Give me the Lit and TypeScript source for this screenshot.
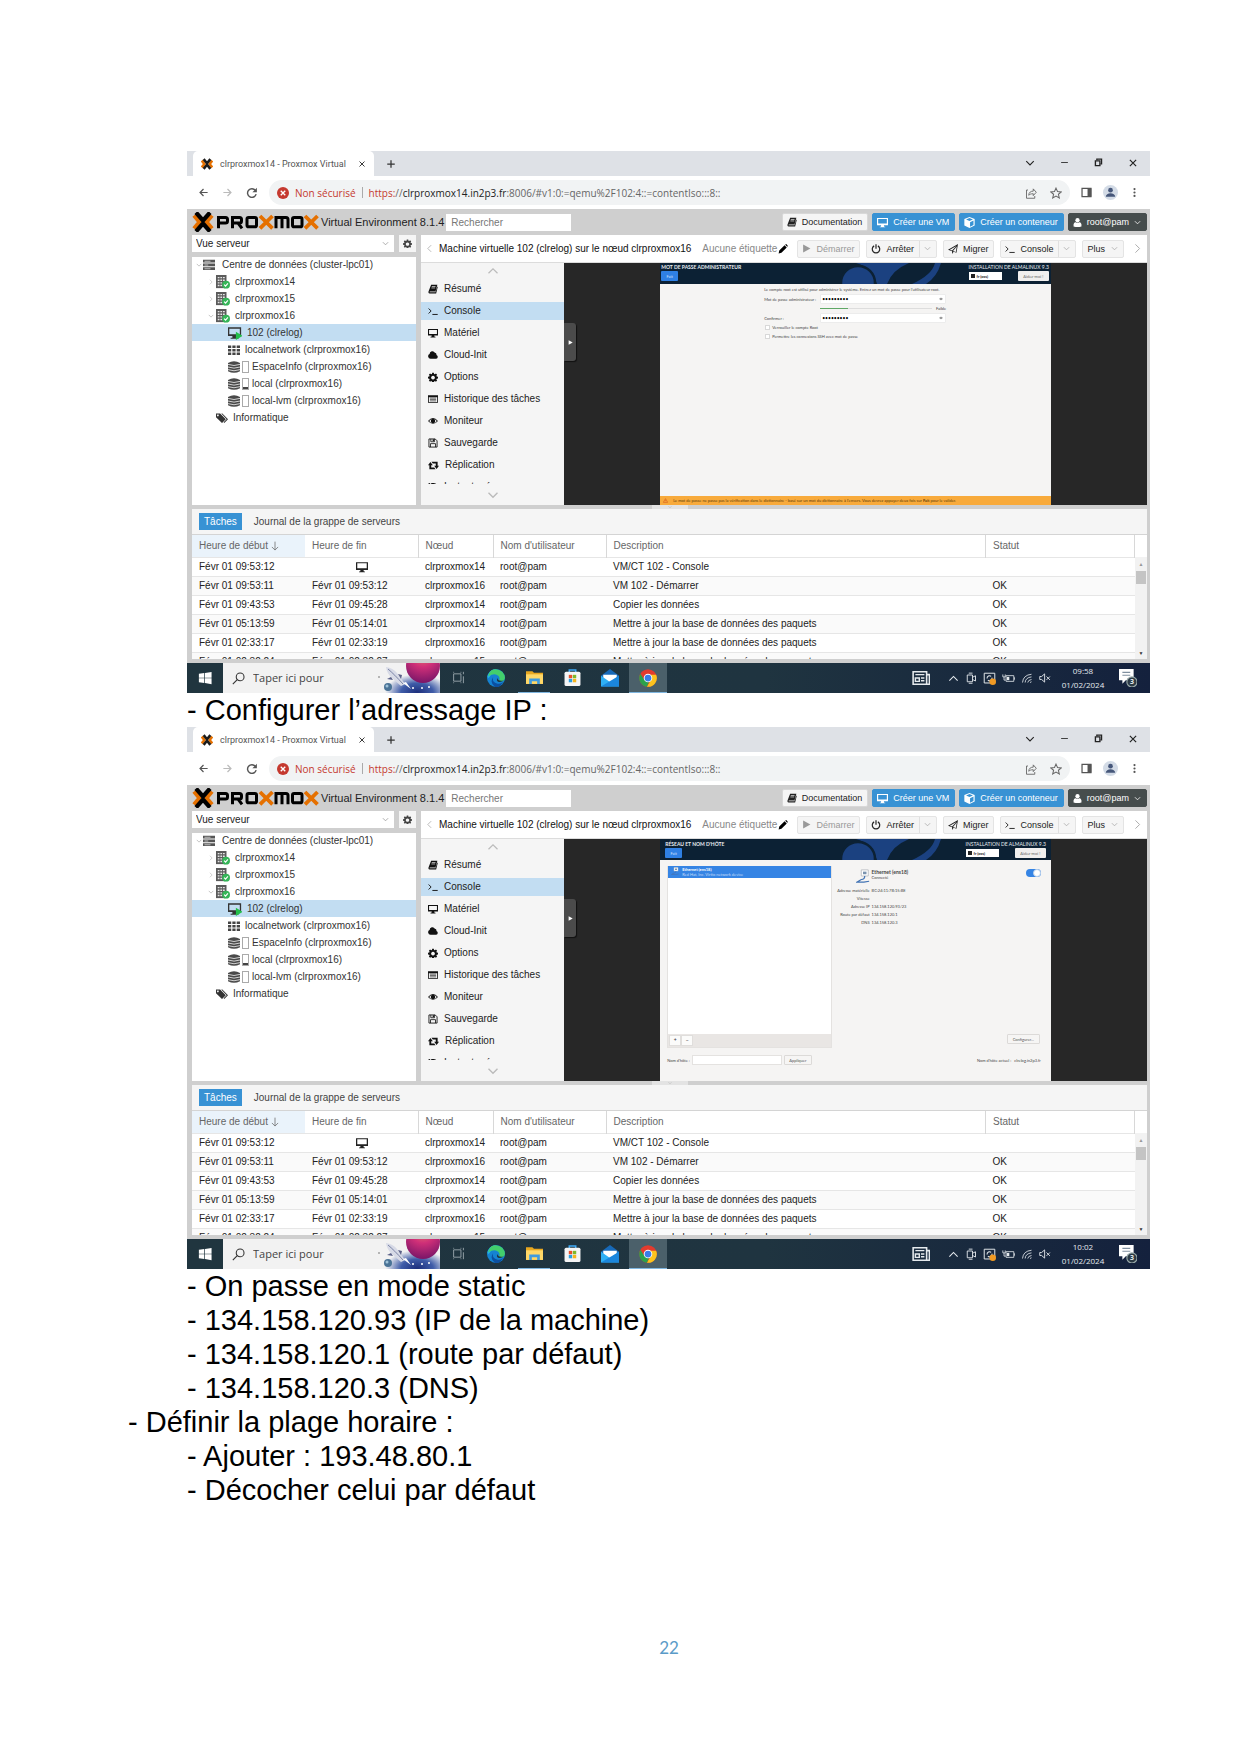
import { LitElement, html, css, svg, nothing } from "lit";
import { customElement, property } from "lit/decorators.js";

/* ---------- icons ---------- */
const icon = (name: string, size = 12) => {
  const d = glyphs[name];
  return html`<svg class="ic" width=${size} height=${size} viewBox="0 0 16 16" fill="currentColor" aria-hidden="true">${d}</svg>`;
};

const line = (d: string, w = 1.4) =>
  svg`<path d=${d} fill="none" stroke="currentColor" stroke-width=${w}></path>`;

const glyphs: Record<string, unknown> = {
  back: line("M14 8H3M8 3L3 8l5 5", 1.8),
  forward: line("M2 8h11M8 3l5 5-5 5", 1.8),
  reload: svg`${line("M13.5 9.5A5.8 5.8 0 1 1 12.5 4.5", 1.9)}<path d="M14.5 1v6h-6z"></path>`,
  close: line("M3 3l10 10M13 3L3 13", 1.9),
  plus: line("M8 2v12M2 8h12", 2),
  minus: line("M2 8h12", 1.5),
  chevDown: line("M2 5l6 6 6-6", 1.8),
  chevUp: line("M2 11l6-6 6 6", 1.6),
  chevLeft: line("M11 2L5 8l6 6", 1.4),
  chevRight: line("M5 2l6 6-6 6", 1.4),
  restore: svg`${line("M2.500 5h8v8.500h-8z", 2.4)}${line("M5 4V2h8.500v8.500h-2", 2.2)}`,
  warn: svg`<circle cx="8" cy="8" r="8" fill="#c5392f"></circle><path d="M5 5l6 6M11 5l-6 6" stroke="#fff" stroke-width="1.800"></path>`,
  share: line("M4 4H2v11h11v-3M5 11c0-4 3-5.500 6-5.500V2.500l4 4.500-4 4.500V9c-3 0-4.500.5-6 2z", 1.2),
  star: line("M8 1.500l2 4.600 5 .4-3.800 3.200 1.200 4.800L8 12l-4.400 2.500 1.200-4.800L1 6.500l5-.4z", 1.4),
  panel: svg`${line("M1.500 2h13v12h-13z", 1.8)}<path d="M9.500 2H15v12H9.500z"></path>`,
  person: svg`<circle cx="8" cy="8" r="8" fill="#d3dbe6"></circle><g fill="#46577a"><circle cx="8" cy="5.500" r="2.500"></circle><path d="M3 12.500c0-5 10-5 10 0z"></path></g>`,
  dots: svg`<circle cx="8" cy="3" r="1.600"></circle><circle cx="8" cy="8" r="1.600"></circle><circle cx="8" cy="13" r="1.600"></circle>`,
  book: svg`<path d="M5 1h10l-3 11H3.500q-1.500 0-1 1.300H12L14.800 4l.8.8L13 15H2.500Q0 15 .8 12z"></path><path d="M6 4h6M5.400 6.300h6" stroke="#fff" stroke-width="1"></path>`,
  term: svg`${line("M1 4l4 4-4 4", 1.5)}${line("M7 13.500h8.500", 1.5)}`,
  monitor: svg`<path d="M0 1.500h16v10.500h-6l.5 2H12v1H4v-1h1.500l.5-2H0zM1.700 3v6.500h12.600V3z" fill-rule="evenodd"></path>`,
  cloud: svg`<path d="M4 14a4 4 0 0 1-1.500-7.600A4.500 4.500 0 0 1 11 4.500 3 3 0 0 1 13.500 8 3.100 3.100 0 0 1 13 14z"></path>`,
  gear: svg`<path fill-rule="evenodd" d="M6.700 1h2.600l.4 2 1.300.6 1.700-1.200 1.900 1.900-1.200 1.700.6 1.300 2 .4v2.600l-2 .4-.6 1.300 1.200 1.700-1.900 1.900-1.700-1.200-1.300.6-.4 2H6.700l-.4-2-1.300-.6-1.700 1.200-1.900-1.900L2.600 12 2 10.700l-2-.4V7.700l2-.4L2.600 6 1.400 4.300l1.900-1.900L5 3.600 6.300 3zM8 6a3 3 0 1 0 .01 0z"></path>`,
  list: svg`<path fill-rule="evenodd" d="M0 2h16v12H0zM1.300 5v7.700h13.400V5z"></path><path d="M3 6.500h10M3 8.700h10M3 11h10" stroke="currentColor" stroke-width="1"></path>`,
  eye: svg`<path fill-rule="evenodd" d="M0 8q8-10 16 0-8 9-16 0zm2 0q2 2.800 4 3.300-3-3.300 0-6.600Q4 5.500 2 8zm12 0q-2-2.500-4-3.300 3 3.300 0 6.600 2-.500 4-3.300z"></path>`,
  floppy: svg`${line("M1.500 1.500h10l3 3v10h-13z", 1.4)}${line("M4 14.500V9h8v5.500M4.500 1.500v4.500h6V1.500", 1.3)}<path d="M7.500 2h2v3h-2z"></path>`,
  retweet: svg`<path d="M3.500 3L7 7.500H4.700V11H9l2 2.500H2V7.500H0zM12.500 13L9 8.500h2.300V5H7L5 2.500h9v6h2z"></path>`,
  history: line("M3 6a6 6 0 1 1 0 5M2 1.500V6.500h5", 2),
  pencil: svg`<path d="M1 15l1-4.500L10.500 2 14 5.500 5.500 14zM11.500 1l1-.8q1-.5 3.300 2.800L14.800 4.500z"></path>`,
  play: svg`<path d="M2 1l13 7-13 7z"></path>`,
  power: line("M5 3a6 6 0 1 0 6 0M8 0.500v7", 1.9),
  plane: svg`<path fill-rule="evenodd" d="M16 0l-2.500 14-4.500-1.800L6.500 16v-4.500L0 9zM13.500 3.200L3 9l3.500 1.300zM14 4L8 11l4.500 1.800z"></path>`,
  cube: svg`<path fill-rule="evenodd" d="M8 0l7.500 3v9.500L8 16 .5 12.500V3zM8 1.600L3 3.700l5 2 5-2zM8.800 7.500v6.500l5-2.400V5.200z"></path>`,
  user: svg`<circle cx="8" cy="4" r="3.800"></circle><path d="M1 15V11q1-4 4-3.500 3 2 6 0Q14 7 15 11v4q-7 2-14 0z"></path>`,
  servers: svg`<path fill="#555" d="M0 1h16v3.800H0zM0 6h16v3.800H0zM0 11h16v3.800H0z"></path><path d="M2 3h8M2 8h5M2 13h8" stroke="#ddd" stroke-width="1"></path>`,
  node: svg`<path fill="#5b5b5b" d="M0 0h12v15H0z"></path><path d="M2 3h2M5 3h2M8 3h2M2 6h2M5 6h2M8 6h2M2 9h2M5 9h2M2 12h2M5 12h2" stroke="#e5e5e5" stroke-width="1.500"></path><circle cx="11.500" cy="11" r="4.500" fill="#35b558"></circle><path d="M9.300 11l1.600 1.700 2.700-3.200" stroke="#fff" fill="none" stroke-width="1.300"></path>`,
  vm: svg`<path fill="#333" fill-rule="evenodd" d="M0 1.500h15v10h-5v2h2v1H3v-1h2v-2H0zM1.500 3v6.500h12V3z"></path><path fill="#24bf4c" d="M9 6.500l7.500 4.800L9 16z"></path>`,
  grid: svg`<g fill="#444"><path d="M0 2h4.300v3.300H0zM5.800 2h4.300v3.300H5.800zM11.600 2H16v3.300h-4.400zM0 6.600h4.300v3.300H0zM5.800 6.600h4.300v3.300H5.800zM11.600 6.600H16v3.300h-4.400zM0 11.200h4.300v3.300H0zM5.800 11.200h4.300v3.300H5.800zM11.600 11.200H16v3.300h-4.400z"></path></g>`,
  disk: svg`<path fill="#4a4a4a" d="M0 2.500Q8-2 16 2.500V13.500Q8 18 0 13.500z"></path><path d="M0 4.500q8 3 16 0M0 8q8 3 16 0M0 11.500q8 3 16 0" fill="none" stroke="#fff" stroke-width="1"></path>`,
  tags: svg`<path fill-rule="evenodd" d="M0 2h5.500L13 9.500 8 14.500 0 7zM2.500 3.300a1.200 1.200 0 1 0 .01 0z"></path><path d="M7 2h1.500L16 9.500l-5 5-.8-.8 4-4.200z"></path>`,
  arrowDown: line("M8 1v13M3 9.500l5 5 5-5", 1.2),
  lens: svg`<circle cx="10" cy="6" r="4.800" fill="none" stroke="currentColor" stroke-width="1.300"></circle>${line("M6.500 9.500L1 15", 1.4)}`,
  px: svg`<g fill="none" stroke-width="3.400"><path d="M1 3.500l3.500 4.500L1 12.500M15 3.500L11.500 8l3.500 4.500" stroke="#e57000"></path><path d="M3.500 1.500L8 7l4.500-5.500M3.500 14.500L8 9l4.500 5.500" stroke="#1b1b1b"></path></g>`,
  win: svg`<path fill="#fff" d="M1 3.200l6.200-.9v5.300H1zM8 2.200L15.500 1v6.600H8zM1 8.400h6.200v5.300L1 12.800zM8 8.400h7.500V15L8 13.800z"></path>`,
  taskview: line("M2 3.500h9v9H2zM2 1v1M11 1v1M2 15v-1M11 15v-1M14 1v3M14 6.500v8.500", 1),
  edge: svg`<circle cx="8" cy="8" r="8" fill="#1583d2"></circle><path fill="#27b5e0" d="M.3 7Q2 .5 8 0 5 3 1.500 8z"></path><path fill="#43cf6c" d="M4 1.200Q9-1.500 13.500 2.500 17.500 7 15 10q-2.500 1.800-4.500.5Q12 8 10 6 7 3 1 6.500 1.800 3 4 1.200z"></path><path fill="#0c4fa0" d="M5.500 7Q4 12 9.500 13q3 .5 5-1.500Q11 17 7 15.800 2 12 5.500 7z"></path><path fill="#20353f" d="M9.800 8Q9 11 15 10.200 12 12.200 9.500 11 8 10 9.800 8z"></path>`,
  folder: svg`<path fill="#e9a820" d="M0 2h6l1.500 1.500H16V14H0z"></path><path fill="#ffd868" d="M0 5h16v9H0z"></path><path fill="#3f9be0" d="M3 14V9h10v5h-2.500v-2.500h-5V14z"></path>`,
  store: svg`<path d="M5 3V1h6v2" stroke="#3fa9f5" fill="none" stroke-width="1.500"></path><rect x=".5" y="2.500" width="15" height="13.500" rx="1.500" fill="#f5f5f5"></rect><path fill="#e8502a" d="M4.500 5.500h3.200v3.200H4.500z"></path><path fill="#7fb92b" d="M8.300 5.500h3.200v3.200H8.300z"></path><path fill="#2a9fe0" d="M4.500 9.300h3.200v3.200H4.500z"></path><path fill="#f6b51e" d="M8.300 9.300h3.200v3.200H8.300z"></path>`,
  mail: svg`<path fill="#1769b8" d="M0 6l8-6 8 6v9H0z"></path><path fill="#fff" d="M2 5h12v5l-6 3-6-3z"></path><path fill="#2fb0f5" d="M0 6l8 5.500L16 6v9.500H0z"></path><path fill="#1b86dc" d="M0 15.500L16 6v9.500z"></path>`,
  chrome: svg`<circle cx="8" cy="8" r="7.800" fill="#e33b2e"></circle><path fill="#fcc31e" d="M8 5h7.200A7.800 7.800 0 0 1 7 15.800L11 9z"></path><path fill="#2ba24c" d="M1.200 4.200L5 10l4 1-2 4.800A7.800 7.800 0 0 1 1.200 4.200z"></path><circle cx="8" cy="8" r="3.800" fill="#fff"></circle><circle cx="8" cy="8" r="3" fill="#3a7de8"></circle>`,
  news: svg`${line("M1 2.500h12v11H1zM13 5h2.500v8.500H13", 1.4)}${line("M3 5h8M3 8h3.500v3H3zM8 8h3M8 10.500h3", 1.3)}`,
  meet: line("M3 4h7v9H3zM10 7l4-2v7l-4-2M5 1.500h5M5 15h5", 1.2),
  sync: svg`${line("M1.500 1.500h13v12h-13z", 1.2)}${line("M5 8a3 3 0 0 1 5-2.500M11 7a3 3 0 0 1-5 3", 1.3)}<circle cx="12" cy="12" r="4" fill="#f09a24"></circle>`,
  battery: svg`${line("M5 4.500h9.500v7H5zM15.500 6.500v3M1 3v3h3V3M2.500 6v4h2", 1)}<path d="M6 6h3v4H6z"></path>`,
  wifi: line("M2 14Q3 4 14 3M5.500 14Q6 7.500 14 6.500M9 14q.500-3.500 5-4M12 14l2-1", 1.1),
  mute: svg`${line("M1 6h2.500L7.500 2.500v11L3.500 10H1z", 1.2)}${line("M10 6l4.500 4.500M14.500 6L10 10.500", 1.2)}`,
  note: svg`<path fill="#fff" d="M0 0h13v10H6l-3 3v-3H0z"></path><path d="M3 3h7M3 5.500h7" stroke="#8090a0"></path><circle cx="11.500" cy="11.500" r="4.500" fill="#2c3a44" stroke="#9aa"></circle>`,
  plug: svg`<path d="M6 1h8v7H6z" fill="#fff" stroke="#b8bcc0"></path><path d="M8 3h4v3H8z" fill="#7a93ae"></path><path d="M10 8q0 4-4 4l-5 3h8l6-1" fill="none" stroke="#4273b4" stroke-width="1.400"></path>`,
  alert: svg`<path d="M8 2l7 12H1z" fill="none" stroke="#d4561c" stroke-width="1.800"></path><path d="M8 6v4" stroke="#d4561c" stroke-width="1.600"></path>`,
};

const base = css`
  *, *::before, *::after { box-sizing: border-box; }
  .ic { display: block; flex: none; }
  button, input, select { font: inherit; color: inherit; margin: 0; border-radius: 0; }
  button { display: inline-flex; align-items: center; justify-content: center; border: 0; padding: 0; background: none; white-space: nowrap; }
`;

/* ---------- guest installer shown in the VM console ---------- */
@customElement("guest-screen")
export class GuestScreen extends LitElement {
  @property() screen = "password";

  static styles = [base, css`
    :host { display: flex; flex-direction: column; width: 67%; background: #f5f4f3; font: 4px/5px Lato, "Liberation Sans", sans-serif; color: #444; }
    .head { height: 21px; flex: none; display: flex; justify-content: space-between; padding: 2px 2px 0 1px; color: #e8edf2; background: #0c2134; position: relative; overflow: hidden; }
    .indent .head { padding: 3px 5px 0; }
    .wrap { display: flex; flex-direction: column; flex: 1; }
    .art { position: absolute; top: 0; left: 46%; }
    .left, .right { position: relative; display: flex; flex-direction: column; align-items: flex-start; gap: 1px; }
    .title { font-weight: 700; font-size: 5px; line-height: 5px; white-space: nowrap; }
    .right .title { font-weight: 400; }
    .done { width: 17px; height: 10px; background: #2f80e4; color: #cfe2fb; border-radius: 1px; }
    .tools { display: flex; width: 100%; justify-content: space-between; align-items: center; }
    .kbd { width: 33px; height: 8px; background: #fff; color: #111; font-weight: 700; gap: 2px; justify-content: flex-start; padding-left: 2px; }
    .kbd::before { content: ""; width: 4px; height: 4px; background: #222; }
    .help { width: 31px; height: 10px; background: #f0efee; color: #666; border-radius: 1px; }
    .form { width: 182px; margin: 2px auto 0 104px; display: grid; grid-template-columns: 56px 1fr; align-items: center; }
    .form .full { grid-column: 1 / -1; white-space: nowrap; height: 8px; line-height: 7px; }
    .field { display: flex; height: 10px; align-items: center; background: #fff; border: 1px solid #ececec; border-radius: 1px; color: #888; padding-right: 2px; }
    .field input { flex: 1; min-width: 0; height: 8px; border: 0; padding: 0 1px; background: none; font-size: 5px; line-height: 8px; color: #000; outline: 0; }
    .meter { grid-column: 2; display: flex; align-items: center; height: 9px; gap: 4px; }
    .bar { flex: 1; height: 1px; background: #ddd; }
    .bar::before { content: ""; display: block; width: 25%; height: 1px; background: #5fa866; }
    .check { grid-column: 1 / -1; display: flex; align-items: center; gap: 2px; height: 9px; padding-left: 1px; }
    .check input { appearance: none; width: 5px; height: 5px; border: 1px solid #d8d8d8; background: #fff; }
    .fill { flex: 1; }
    .notice { height: 9px; display: flex; align-items: center; gap: 5px; padding: 0 3px; background: #f8aa3b; color: #5c3a08; white-space: nowrap; overflow: hidden; }
    .net { flex: 1; display: grid; grid-template-columns: 44% 1fr; gap: 0 4px; padding: 6px 10px 0 7px; }
    .devices { height: 182px; display: flex; flex-direction: column; background: #fff; border: 1px solid #e4e2e0; border-top: 0; }
    .device { display: flex; gap: 3px; height: 12px; padding: 1px 3px; background: #3584e4; color: #fff; line-height: 5px; }
    .device small, .info small { display: block; font-size: 4px; line-height: 5px; }
    .device small { color: #c4dbf8; }
    .devbar { height: 13px; display: flex; gap: 0; padding: 1px; background: #e9e6e4; margin-top: auto; }
    .devbar button { width: 12px; background: #fbfbfa; border: 1px solid #e0dedc; color: #333; font-size: 5px; }
    .detail { display: flex; flex-direction: column; }
    .info { display: flex; gap: 2px; padding: 3px 0 0 20px; align-items: flex-start; }
    .info b { font-size: 5px; line-height: 6px; display: block; }
    .switch { appearance: none; width: 15px; height: 8px; border-radius: 4px; background: #3584e4; margin: 0 0 0 auto; padding: 0; display: flex; justify-content: flex-end; }
    .switch::before { content: ""; width: 8px; height: 8px; border-radius: 50%; background: #fff; border: 1px solid #b9cfe9; }
    dl { display: grid; grid-template-columns: 34px 1fr; gap: 3px 2px; margin: 5px 0 0; }
    dt { text-align: right; white-space: nowrap; }
    dd { margin: 0; }
    .plain { width: 33px; height: 10px; border: 1px solid #dcdad8; border-radius: 1px; background: #f6f5f4; color: #555; }
    .conf { margin: auto 1px 4px auto; }
    .host { grid-column: 1 / -1; display: flex; align-items: center; gap: 2px; height: 37px; padding-bottom: 13px; }
    .host input { width: 90px; height: 10px; border: 1px solid #e4e2e0; background: #fff; padding: 0; }
    .host .plain { width: 28px; }
    .now { margin-left: auto; }
  `];

  private head(title: string) {
    return html`<div class="head">
      <svg class="art" width="102" height="21" viewBox="0 0 102 21" aria-hidden="true">
        <path d="M16 0h53Q52 7 47 21H37Q32 4 16 0z" fill="#1b4180"></path>
        <circle cx="18" cy="20" r="17" fill="#1b4180" stroke="#0c2134" stroke-width="2.500"></circle>
        <path d="M101 0q-4 14-15 21H72Q92 12 95 0z" fill="#1b4180"></path>
      </svg>
      <div class="left"><span class="title">${title}</span><button class="done">Fait</button></div>
      <div class="right"><span class="title">INSTALLATION DE ALMALINUX 9.3</span>
        <div class="tools"><button class="kbd">fr (oss)</button><button class="help">Aidez-moi !</button></div>
      </div>
    </div>`;
  }

  private password() {
    return html`<div class="wrap">${this.head("MOT DE PASSE ADMINISTRATEUR")}
      <div class="form">
        <span class="full">Le compte root est utilisé pour administrer le système. Entrez un mot de passe pour l'utilisateur root.</span>
        <label for="pw">Mot de passe administrateur :</label>
        <span class="field"><input id="pw" type="password" value="motdepass" />${icon("eye", 4)}</span>
        <span class="meter"><span class="bar"></span><span>Faible</span></span>
        <label for="pw2">Confirmer :</label>
        <span class="field"><input id="pw2" type="password" value="motdepass" />${icon("eye", 4)}</span>
        <label class="check"><input type="checkbox" />Verrouiller le compte Root</label>
        <label class="check"><input type="checkbox" />Permettre les connexions SSH avec mot de passe</label>
      </div>
      <div class="fill"></div>
      <div class="notice">${icon("alert", 5)}<span>Le mot de passe ne passe pas la vérification dans le dictionnaire - basé sur un mot du dictionnaire à l'envers. Vous devrez appuyer deux fois sur <b>Fait</b> pour le valider.</span></div>
    </div>`;
  }

  private network() {
    return html`<div class="wrap indent">${this.head("RÉSEAU ET NOM D'HÔTE")}
      <div class="net">
        <div class="devices">
          <div class="device">${icon("plug", 8)}<span><b>Ethernet (ens18)</b><small>Red Hat, Inc. Virtio network device</small></span></div>
          <div class="devbar"><button aria-label="Ajouter">+</button><button aria-label="Retirer">−</button></div>
        </div>
        <div class="detail">
          <div class="info">${icon("plug", 14)}<span><b>Ethernet (ens18)</b><small>Connecté</small></span>
            <input class="switch" type="checkbox" checked aria-label="Ethernet (ens18)" /></div>
          <dl>
            <dt>Adresse matérielle</dt><dd>BC:24:11:7B:15:BE</dd>
            <dt>Vitesse</dt><dd></dd>
            <dt>Adresse IP</dt><dd>134.158.120.93/23</dd>
            <dt>Route par défaut</dt><dd>134.158.120.1</dd>
            <dt>DNS</dt><dd>134.158.120.3</dd>
          </dl>
          <button class="plain conf">Configurer...</button>
        </div>
        <div class="host"><label for="hn">Nom d'hôte :</label><input id="hn" type="text" /><button class="plain">Appliquer</button>
          <span class="now">Nom d'hôte actuel : &nbsp; clrelog.in2p3.fr</span></div>
      </div>
    </div>`;
  }

  render() {
    return this.screen === "password" ? this.password() : this.network();
  }
}

/* ---------- Proxmox web interface ---------- */
const tree = [
  { level: 0, arrow: "chevDown", icon: "servers", text: "Centre de données (cluster-lpc01)" },
  { level: 1, arrow: "chevRight", icon: "node", text: "clrproxmox14" },
  { level: 1, arrow: "chevRight", icon: "node", text: "clrproxmox15" },
  { level: 1, arrow: "chevDown", icon: "node", text: "clrproxmox16" },
  { level: 2, icon: "vm", text: "102 (clrelog)", on: true },
  { level: 2, icon: "grid", text: "localnetwork (clrproxmox16)" },
  { level: 2, icon: "disk", usage: "0%", text: "EspaceInfo (clrproxmox16)" },
  { level: 2, icon: "disk", usage: "15%", text: "local (clrproxmox16)" },
  { level: 2, icon: "disk", usage: "0%", text: "local-lvm (clrproxmox16)" },
  { level: 1, icon: "tags", text: "Informatique" },
];

const menu = [
  ["book", "Résumé"], ["term", "Console"], ["monitor", "Matériel"], ["cloud", "Cloud-Init"], ["gear", "Options"],
  ["list", "Historique des tâches"], ["eye", "Moniteur"], ["floppy", "Sauvegarde"], ["retweet", "Réplication"], ["history", "Instantanés"],
];

const update = "Mettre à jour la base de données des paquets";
const tasks = [
  ["Févr 01 09:53:12", "", "clrproxmox14", "root@pam", "VM/CT 102 - Console", ""],
  ["Févr 01 09:53:11", "Févr 01 09:53:12", "clrproxmox16", "root@pam", "VM 102 - Démarrer", "OK"],
  ["Févr 01 09:43:53", "Févr 01 09:45:28", "clrproxmox14", "root@pam", "Copier les données", "OK"],
  ["Févr 01 05:13:59", "Févr 01 05:14:01", "clrproxmox14", "root@pam", update, "OK"],
  ["Févr 01 02:33:17", "Févr 01 02:33:19", "clrproxmox16", "root@pam", update, "OK"],
  ["Févr 01 02:32:24", "Févr 01 02:32:27", "clrproxmox15", "root@pam", update, "OK"],
];

@customElement("proxmox-ui")
export class ProxmoxUi extends LitElement {
  @property() screen = "password";

  static styles = [base, css`
    :host { display: flex; flex-direction: column; background: #cfcfcf; color: #222; font: 10px/12px "Liberation Sans", Arial, sans-serif; padding: 0 3px 4px 5px; }
    .top { height: 26px; display: flex; align-items: center; gap: 4px; }
    .logo { flex: none; }
    .ver { font-size: 11px; white-space: nowrap; margin: 0 -2px; }
    .search { width: 125px; height: 17px; border: 0; background: #fff; padding: 0 5px; font-size: 10px; }
    .search::placeholder { color: #777; opacity: 1; }
    .btn { height: 18px; font-size: 9px; gap: 5px; padding: 0 5px 0 4px; border-radius: 2px; background: #f5f5f5; border: 1px solid #d8d8d8; color: #222; }
    .btn.blue { background: #3892d4; border-color: #3892d4; color: #fff; }
    .btn.dark { background: #464d4d; border-color: #464d4d; color: #fff; }
    .top .btn:first-of-type { margin-left: auto; }
    .cols { display: flex; gap: 5px; height: 270px; }
    .nav { width: 224px; flex: none; display: flex; flex-direction: column; gap: 5px; }
    .pick { display: flex; gap: 5px; height: 17px; }
    .selbox { flex: 1; position: relative; display: flex; }
    .selbox select { flex: 1; appearance: none; border: 0; background: #fff; padding: 0 4px; }
    .selbox .ic { position: absolute; right: 5px; top: 5px; color: #999; pointer-events: none; }
    .gear { width: 17px; background: #f5f5f5; color: #444; }
    .tree { flex: 1; margin: 0; padding: 0; list-style: none; background: #fff; }
    .tree li { display: flex; align-items: center; height: 17px; gap: 5px; color: #333; white-space: nowrap; }
    .tree li:first-child { height: 16px; }
    .tree .on { background: #c2ddf2; }
    .l0 { padding-left: 4px; } .l1 { padding-left: 16px; } .l2 { padding-left: 36px; }
    .arrow { width: 6px; margin-right: -3px; color: #aaa; }
    .l0 .arrow { margin-right: -4px; }
    .l0 > .ic { margin-right: 2px; }
    .use { display: flex; align-items: flex-end; width: 7px; height: 12px; border: 1px solid #aaa; margin: 0 -2px 0 -3px; }
    .use i { display: block; width: 100%; background: #444; }
    .main { flex: 1; min-width: 0; display: flex; flex-direction: column; }
    .bar { height: 27px; flex: none; display: flex; align-items: center; background: #fff; padding: 0 4px; gap: 6px; white-space: nowrap; }
    .bar > .ic { color: #aaa; margin-right: -1px; }
    .bar .btn { border-color: #e4e4e4; }
    .bar .ttl { color: #111; margin-right: 5px; }
    .bar .tag { display: flex; align-items: center; color: #888; gap: 1px; margin-right: 3px; }
    .bar .tag .ic { color: #000; }
    .bar .btn .split { align-self: stretch; border-left: 1px solid #e0e0e0; padding-left: 4px; display: flex; align-items: center; color: #aaa; }
    .bar .btn .grey { color: #aaa; margin-left: 1px; }
    .bar .btn:disabled { color: #999; }
    .bar .end { color: #aaa; margin-left: auto; }
    .body { flex: 1; display: flex; border-top: 1px solid #dcdcdc; min-height: 0; }
    .menu { width: 143px; flex: none; background: #f5f5f5; display: flex; flex-direction: column; align-items: center; }
    .scr { height: 15px; display: flex; align-items: center; color: #bbb; }
    .scr:last-child { margin: auto; }
    .menu ul { width: 100%; height: 206px; overflow: hidden; margin: 0; padding: 0; list-style: none; }
    .menu li { padding: 2px 0; }
    .menu a { display: flex; align-items: center; gap: 6px; height: 18px; padding-left: 7px; color: #222; text-decoration: none; }
    .menu a .ic { color: #111; }
    .menu .on { background: #c2ddf2; }
    .console { flex: 1; display: flex; justify-content: center; background: #272727; position: relative; }
    .handle { position: absolute; left: 0; top: 60px; width: 12px; height: 38px; background: #4b4b4b; color: #fff; border-radius: 0 3px 3px 0; box-shadow: 1px 1px 1px #111; }
    .split-h { height: 4px; display: flex; justify-content: center; }
    .split-h span { width: 36px; height: 4px; background: #e3e3e3; color: #aaa; display: flex; justify-content: center; }
    .log { background: #f5f5f5; height: 150px; overflow: hidden; }
    .tabs { height: 25px; display: flex; align-items: center; gap: 12px; padding-left: 7px; color: #444; }
    .tabs .cur { background: #3892d4; color: #fff; height: 17px; padding: 0 5px; font-weight: 400; }
    .tblwrap { display: flex; background: #fff; border-top: 1px solid #d4d4d4; }
    table { flex: 1; border-collapse: collapse; table-layout: fixed; min-width: 0; width: 100%; }
    th { height: 22px; font-weight: 400; text-align: left; color: #666; padding: 0 7px; border-right: 1px solid #d8d8d8; }
    th:first-child { background: #eaf3fb; border-right: 0; }
    th span { display: flex; align-items: center; gap: 2px; }
    td { height: 19px; padding: 0 7px; border-top: 1px solid #e6e6e6; white-space: nowrap; color: #222; overflow: hidden; }
    tbody tr:nth-child(even) td { background: #fafafa; }
    td .ic { margin: 0 auto; color: #222; }
    .c1 { width: 113px; } .c2 { width: 113px; } .c3 { width: 75px; } .c4 { width: 113px; } .c6 { width: 149px; }
    .sb { width: 12px; flex: none; display: flex; flex-direction: column; align-items: center; height: 125px; padding-top: 23px; color: #999; font-size: 5px; line-height: 13px; background: linear-gradient(#fff 22px, #f2f2f2 22px); }
    .sb::before { content: "▲"; } .sb::after { content: "▼"; margin-top: auto; color: #333; }
    .sb i { width: 10px; height: 13px; background: #c4c4c4; flex: none; }
  `];

  render() {
    return html`
      <div class="top">
        <svg class="logo" width="127" height="20" viewBox="0 0 127 20" role="img" aria-label="Proxmox">
          <g fill="none" stroke-width="4.200">
            <path d="M2 3.500l5.500 6.500L2 16.500M20 3.500l-5.500 6.500 5.500 6.500" stroke="#e57000"></path>
            <path d="M4 .5l7 8 7-8M4 19.500l7-8 7 8" stroke="#000"></path>
          </g>
          <g fill="none" stroke="#000" stroke-width="3">
            <path d="M26.500 16.300V5.500h7q2 0 2 2v1.500q0 2-2 2h-6"></path>
            <path d="M40.500 16.300V5.500h7q2 0 2 2v1.500q0 2-2 2h-6M46 11l4 5.300"></path>
            <rect x="55" y="5.500" width="9.500" height="9.300" rx="1.600"></rect>
            <path d="M84 16.300V5.500h10q2 0 2 2v8.800M90 5v11.300"></path>
            <rect x="100.500" y="5.500" width="9.500" height="9.300" rx="1.600"></rect>
          </g>
          <path d="M68 4l12.500 12.300M80.500 4L68 16.300M113 4l12.500 12.300M125.500 4L113 16.300" stroke="#e57000" stroke-width="3.800"></path>
        </svg>
        <span class="ver">Virtual Environment 8.1.4</span>
        <input class="search" type="search" placeholder="Rechercher" aria-label="Rechercher" />
        <button class="btn">${icon("book", 10)}Documentation</button>
        <button class="btn blue">${icon("monitor", 11)}Créer une VM</button>
        <button class="btn blue">${icon("cube", 11)}Créer un conteneur</button>
        <button class="btn dark">${icon("user", 9)}root@pam ${icon("chevDown", 7)}</button>
      </div>
      <div class="cols">
        <div class="nav">
          <div class="pick">
            <span class="selbox"><select aria-label="Vue"><option>Vue serveur</option></select>${icon("chevDown", 7)}</span>
            <button class="gear" aria-label="Paramètres">${icon("gear", 9)}</button>
          </div>
          <ul class="tree">
            ${tree.map((t) => html`<li class="l${t.level} ${t.on ? "on" : ""}">
              ${t.arrow ? html`<span class="arrow">${icon(t.arrow, 6)}</span>` : t.level === 1 ? html`<span class="arrow"></span>` : nothing}
              ${icon(t.icon, t.icon === "vm" || t.icon === "node" ? 14 : 12)}
              ${t.usage ? html`<span class="use"><i style="height:${t.usage}"></i></span>` : nothing}
              <span>${t.text}</span></li>`)}
          </ul>
        </div>
        <div class="main">
          <div class="bar">
            ${icon("chevLeft", 9)}<span class="ttl">Machine virtuelle 102 (clrelog) sur le nœud clrproxmox16</span>
            <span class="tag">Aucune étiquette${icon("pencil", 10)}</span>
            <button class="btn" disabled>${icon("play", 9)}Démarrer</button>
            <button class="btn">${icon("power", 10)}Arrêter<span class="split">${icon("chevDown", 7)}</span></button>
            <button class="btn">${icon("plane", 10)}Migrer</button>
            <button class="btn">${icon("term", 10)}Console<span class="split">${icon("chevDown", 7)}</span></button>
            <button class="btn">Plus<span class="grey">${icon("chevDown", 7)}</span></button>
            <span class="end">${icon("chevRight", 11)}</span>
          </div>
          <div class="body">
            <nav class="menu">
              <span class="scr">${icon("chevUp", 12)}</span>
              <ul>${menu.map(([i, t]) => html`<li><a href="#" class=${t === "Console" ? "on" : ""}>${icon(i, i === "retweet" ? 11 : 10)}${t}</a></li>`)}</ul>
              <span class="scr">${icon("chevDown", 12)}</span>
            </nav>
            <div class="console">
              <guest-screen .screen=${this.screen}></guest-screen>
              <button class="handle" aria-label="Commandes">${icon("play", 5)}</button>
            </div>
          </div>
        </div>
      </div>
      <div class="split-h"><span>${icon("chevDown", 4)}</span></div>
      <div class="log">
        <div class="tabs"><button class="cur">Tâches</button><button>Journal de la grappe de serveurs</button></div>
        <div class="tblwrap">
          <table>
            <colgroup><col class="c1" /><col class="c2" /><col class="c3" /><col class="c4" /><col /><col class="c6" /></colgroup>
            <thead><tr><th><span>Heure de début${icon("arrowDown", 10)}</span></th><th>Heure de fin</th><th>Nœud</th><th>Nom d'utilisateur</th><th>Description</th><th>Statut</th></tr></thead>
            <tbody>${tasks.map((r) => html`<tr>${r.map((c, i) => html`<td>${i === 1 && !c ? icon("monitor", 12) : c}</td>`)}</tr>`)}</tbody>
          </table>
          <div class="sb"><i></i></div>
        </div>
      </div>`;
  }
}

/* ---------- Windows desktop: browser window and taskbar ---------- */
@customElement("desktop-capture")
export class DesktopCapture extends LitElement {
  @property() screen = "password";
  @property() time = "";

  static styles = [base, css`
    :host { display: flex; flex-direction: column; font: 10px/14px "Open Sans", "Noto Sans", sans-serif; color: #333; }
    .strip { height: 25px; display: flex; align-items: center; background: #dee1e6; padding-left: 6px; }
    .tab { width: 181px; height: 25px; display: flex; align-items: center; background: #fff; border-radius: 5px 5px 0 0; padding: 0 8px; gap: 7px; }
    .tab .t { flex: 1; white-space: nowrap; font-family: Roboto, "Open Sans", sans-serif; font-size: 9px; color: #555; }
    .add { margin-left: 12px; }
    .wins { margin-left: auto; display: flex; gap: 25px; padding: 0 12px 2px 0; color: #222; }
    .addr { height: 33px; display: flex; align-items: center; background: #fff; padding: 0 10px 0 11px; gap: 11px; color: #555; }
    .hist { display: flex; gap: 13px; }
    .omni { flex: 1; display: flex; align-items: center; height: 25px; border-radius: 13px; background: #f1f3f4; padding: 0 8px; gap: 6px; color: #666; }
    .omni .bad { color: #c5392f; white-space: nowrap; }
    .omni i { width: 1px; height: 11px; background: #aaa; }
    .url { flex: 1; white-space: nowrap; }
    .url .s { color: #c5392f; } .url b { font-weight: 400; color: #222; }
    .omni .ic + .ic { margin-left: 7px; }
    .dim { color: #bbb; }
    .task { height: 30px; display: flex; background: linear-gradient(90deg, #20353f, #1f3440 60%, #14213d); color: #e5eaee; }
    .start { width: 36px; }
    .find { width: 217px; display: flex; align-items: center; gap: 8px; background: #f2f2f2; color: #333; padding-left: 9px; font-size: 11px; overflow: hidden; }
    .find input { flex: 1; min-width: 0; border: 0; background: none; padding: 0; outline: 0; color: #444; }
    .find input::placeholder { color: #444; opacity: 1; }
    .app { width: 38px; border-bottom: 1px solid transparent; }
    .app.first { width: 37px; color: #aab5bb; }
    .app.open { border-image: linear-gradient(90deg, transparent 10%, #7fb6e0 10% 90%, transparent 90%) 1; }
    .app.front { background: #4b606a; border-bottom-color: #7fb6e0; }
    .tray { margin-left: auto; display: flex; align-items: center; gap: 6px; padding-right: 8px; }
    .tray .news { margin-right: 12px; }
    .clock { font-size: 8px; line-height: 14px; text-align: center; width: 52px; }
    .bell { position: relative; display: flex; margin-left: 4px; padding-right: 5px; }
    .bell span { position: absolute; left: 11px; top: 9px; font-size: 7px; line-height: 8px; font-weight: 700; }
  `];

  render() {
    return html`
      <div class="strip">
        <div class="tab">${icon("px", 12)}<span class="t">clrproxmox14 - Proxmox Virtual</span><button aria-label="Fermer l'onglet">${icon("close", 8)}</button></div>
        <button class="add" aria-label="Nouvel onglet">${icon("plus", 10)}</button>
        <div class="wins"><button aria-label="Onglets">${icon("chevDown", 10)}</button><button aria-label="Réduire">${icon("minus", 9)}</button><button aria-label="Restaurer">${icon("restore", 9)}</button><button aria-label="Fermer">${icon("close", 10)}</button></div>
      </div>
      <div class="addr">
        <div class="hist"><button aria-label="Précédent">${icon("back", 11)}</button><button class="dim" aria-label="Suivant">${icon("forward", 11)}</button><button aria-label="Actualiser">${icon("reload", 12)}</button></div>
        <div class="omni">${icon("warn", 12)}<span class="bad">Non sécurisé</span><i></i>
          <span class="url"><span class="s">https:</span>//<b>clrproxmox14.in2p3.fr</b>:8006/#v1:0:=qemu%2F102:4::=contentIso:::8::</span>
          ${icon("share", 12)}${icon("star", 12)}</div>
        <button aria-label="Panneau">${icon("panel", 11)}</button><button aria-label="Profil">${icon("person", 15)}</button><button aria-label="Menu">${icon("dots", 11)}</button>
      </div>
      <proxmox-ui .screen=${this.screen}></proxmox-ui>
      <div class="task">
        <button class="start" aria-label="Démarrer">${icon("win", 14)}</button>
        <label class="find">${icon("lens", 13)}<input type="text" placeholder="Taper ici pour" aria-label="Taper ici pour" />
          <svg class="ic" width="62" height="30" viewBox="0 0 62 30" aria-hidden="true">
            <defs>
              <radialGradient id="neb" cx=".55" cy=".7" r=".5"><stop offset="0" stop-color="#1d2f7c"></stop><stop offset=".5" stop-color="#3f5ca8"></stop><stop offset="1" stop-color="#f2f2f2"></stop></radialGradient>
              <radialGradient id="pla" cx=".5" cy=".15" r=".85"><stop offset="0" stop-color="#e8806a"></stop><stop offset=".45" stop-color="#cf2f78"></stop><stop offset="1" stop-color="#7a1668"></stop></radialGradient>
            </defs>
            <ellipse cx="36" cy="22" rx="32" ry="18" fill="url(#neb)"></ellipse>
            <circle cx="45" cy="3" r="17" fill="url(#pla)"></circle>
            <path d="M8 4q7 1 11 6l8 11-4 2-9-8Q9 11 8 4z" fill="#d7dae6"></path>
            <path d="M10 6q6 5 15 15" stroke="#7b84a6" fill="none"></path>
            <path d="M13 14l-4 2 6 1zM20 11l4 1-1 4z" fill="#5a6088"></path>
            <path d="M25 20l8 6-5-7z" fill="#fff"></path>
            <circle cx="10" cy="24" r="4" fill="#4a7396"></circle><circle cx="9" cy="23" r="1.500" fill="#9fc2d8"></circle>
            <circle cx="35" cy="25" r="1" fill="#fff"></circle><circle cx="44" cy="25" r="1" fill="#fff"></circle><circle cx="51" cy="24" r="1" fill="#fff"></circle><circle cx="1" cy="14" r=".8" fill="#666"></circle>
          </svg>
        </label>
        <button class="app first" aria-label="Affichage des tâches">${icon("taskview", 13)}</button>
        <button class="app" aria-label="Edge">${icon("edge", 18)}</button>
        <button class="app open" aria-label="Explorateur">${icon("folder", 17)}</button>
        <button class="app" aria-label="Store">${icon("store", 17)}</button>
        <button class="app" aria-label="Courrier">${icon("mail", 18)}</button>
        <button class="app front" aria-label="Chrome">${icon("chrome", 18)}</button>
        <div class="tray">
          <span class="news">${icon("news", 18)}</span>${icon("chevUp", 11)}${icon("meet", 12)}${icon("sync", 13)}${icon("battery", 13)}${icon("wifi", 12)}${icon("mute", 12)}
          <div class="clock">${this.time}<br />01/02/2024</div>
          <div class="bell">${icon("note", 18)}<span>3</span></div>
        </div>
      </div>`;
  }
}

/* ---------- document page ---------- */
@customElement("app-root")
export class AppRoot extends LitElement {
  static styles = css`
    :host { display: block; background: #fff; color: #000; font: 29px/34px "Liberation Sans", Arial, sans-serif; }
    .page { box-sizing: border-box; min-height: 100vh; padding: 151px 91px 96px 128px; display: flex; flex-direction: column; }
    .sub { padding-left: 59px; }
    p { margin: 0; }
    footer { margin-top: auto; text-align: center; padding-left: 60px; font: 17px/24px Lato, "Open Sans", sans-serif; color: #5b9bc8; }
  `;

  render() {
    return html`<main class="page">
      <div class="sub">
        <desktop-capture screen="password" time="09:58"></desktop-capture>
        <p>- Configurer l’adressage IP :</p>
        <desktop-capture screen="network" time="10:02"></desktop-capture>
        <p>- On passe en mode static</p>
        <p>- 134.158.120.93 (IP de la machine)</p>
        <p>- 134.158.120.1 (route par défaut)</p>
        <p>- 134.158.120.3 (DNS)</p>
      </div>
      <p>- Définir la plage horaire :</p>
      <div class="sub">
        <p>- Ajouter : 193.48.80.1</p>
        <p>- Décocher celui par défaut</p>
      </div>
      <footer>22</footer>
    </main>`;
  }
}
